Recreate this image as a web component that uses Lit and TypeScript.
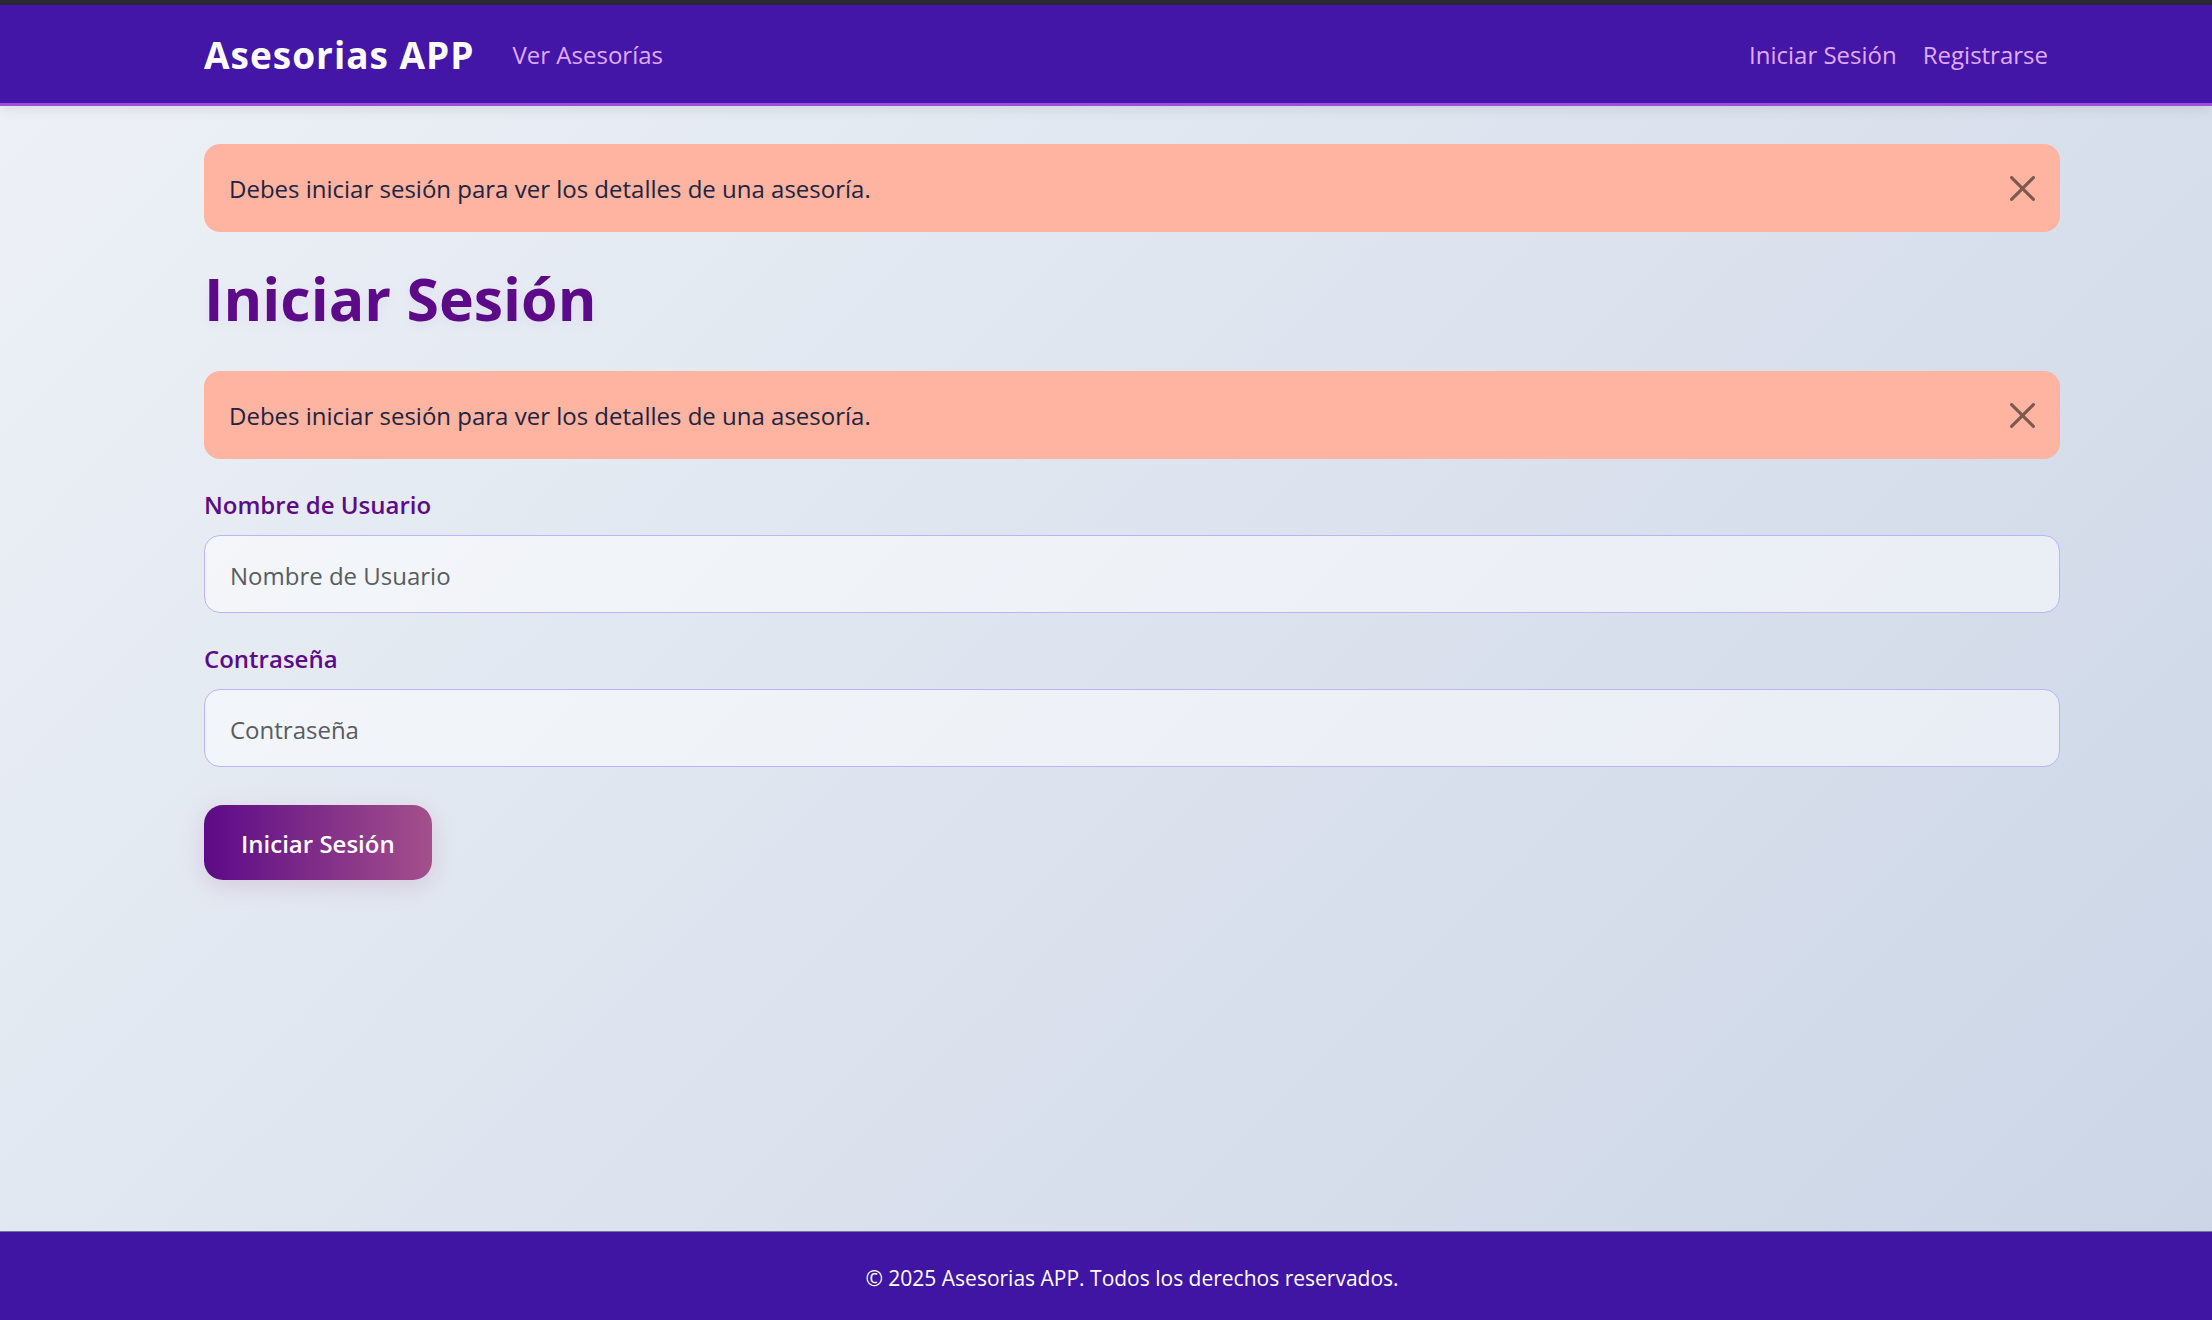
import { LitElement, html, css } from "lit";
import { customElement, property, state } from "lit/decorators.js";

@customElement("alert-banner")
class AlertBanner extends LitElement {
  @state() private closed = false;

  static styles = css`
    :host {
      display: block;
    }
    .alert {
      display: flex;
      align-items: center;
      justify-content: space-between;
      min-height: 88px;
      padding: 0 25px;
      box-sizing: border-box;
      border-radius: 16px;
      background: #ffb3a1;
      color: #212340;
    }
    .text {
      margin: 0;
      padding-top: 2px;
    }
    .close {
      display: flex;
      padding: 0;
      border: 0;
      background: none;
      color: #000;
      opacity: 0.5;
      cursor: pointer;
    }
    .icon {
      width: 25px;
      height: 25px;
    }
  `;

  render() {
    if (this.closed) return html``;
    return html`
      <div class="alert" role="alert">
        <p class="text"><slot></slot></p>
        <button class="close" type="button" aria-label="Cerrar" @click=${() => (this.closed = true)}>
          <svg class="icon" viewBox="0 0 16 16" fill="currentColor" aria-hidden="true">
            <path
              d="M.293.293a1 1 0 0 1 1.414 0L8 6.586 14.293.293a1 1 0 1 1 1.414 1.414L9.414 8l6.293 6.293a1 1 0 0 1-1.414 1.414L8 9.414l-6.293 6.293a1 1 0 0 1-1.414-1.414L6.586 8 .293 1.707a1 1 0 0 1 0-1.414z"
            />
          </svg>
        </button>
      </div>
    `;
  }
}

@customElement("form-field")
class FormField extends LitElement {
  @property() label = "";
  @property() type = "text";

  static styles = css`
    :host {
      display: flex;
      flex-direction: column;
      gap: 12px;
    }
    .label {
      color: #5c0a87;
      font-weight: 600;
      line-height: 36px;
    }
    .input {
      width: 100%;
      height: 78px;
      padding: 2px 25px 0;
      box-sizing: border-box;
      border: 1px solid #bcb2ff;
      border-radius: 16px;
      background: rgba(255, 255, 255, 0.5);
      color: #212340;
      font: inherit;
    }
    .input::placeholder {
      color: #595c5f;
      opacity: 1;
    }
  `;

  render() {
    return html`
      <label class="label" for="control">${this.label}</label>
      <input class="input" id="control" type=${this.type} placeholder=${this.label} />
    `;
  }
}

@customElement("app-root")
class AppRoot extends LitElement {
  static styles = css`
    :host {
      display: block;
      font-family: "Segoe UI", "Open Sans", "Noto Sans", sans-serif;
      font-size: 24px;
      line-height: 36px;
    }
    .page {
      display: flex;
      flex-direction: column;
      min-height: 100vh;
      background: linear-gradient(135deg, #eef2f7, #cbd5e6);
    }
    .strip {
      height: 5px;
      background: #2b2a33;
    }
    .navbar,
    .main,
    .footer {
      padding-left: 52px;
    }
    .container {
      width: calc(100% - 48px);
      max-width: 1856px;
      margin: 0 auto;
    }
    .navbar {
      background: #4316a7;
      border-bottom: 3px solid #9d4edd;
      box-shadow: 0 4px 12px rgba(0, 0, 0, 0.08);
    }
    .bar {
      display: flex;
      align-items: center;
      min-height: 98px;
    }
    .brand {
      margin-right: 38px;
      padding-top: 2px;
      color: #fff;
      font-size: 37px;
      font-weight: 700;
      letter-spacing: 1px;
      text-decoration: none;
    }
    .links {
      display: flex;
      flex: 1;
      gap: 26px;
      padding-top: 2px;
      padding-right: 12px;
    }
    .spacer {
      flex: 1;
    }
    .link {
      color: #e0aaff;
      text-decoration: none;
    }
    .main {
      flex: 1;
      padding-top: 38px;
      padding-bottom: 38px;
    }
    .title {
      margin: 30px 0 37px;
      color: #5c0a87;
      font-size: 59px;
      font-weight: 700;
      line-height: 72px;
      text-shadow: 0 4px 12px rgba(157, 78, 221, 0.08);
    }
    .form {
      display: flex;
      flex-direction: column;
      gap: 28px;
      margin-top: 28px;
    }
    .submit {
      align-self: flex-start;
      height: 75px;
      margin-top: 10px;
      padding: 2px 37px 0;
      border: 0;
      border-radius: 19px;
      background: linear-gradient(90deg, #5c0a87, #a4508b);
      box-shadow: 0 6px 24px rgba(164, 80, 139, 0.2);
      color: #fff;
      font: inherit;
      font-weight: 600;
      cursor: pointer;
    }
    .footer {
      border-top: 1px solid #74739a;
      background: #4115a4;
      color: #fff;
      font-size: 21px;
      text-align: center;
    }
    .copy {
      padding: 28px 0 24px;
    }
  `;

  render() {
    return html`
      <div class="page">
        <div class="strip"></div>
        <header class="navbar">
          <nav class="container bar">
            <a class="brand" href="#">Asesorias APP</a>
            <div class="links">
              <a class="link" href="#asesorias">Ver Asesorías</a>
              <span class="spacer"></span>
              <a class="link" href="#login">Iniciar Sesión</a>
              <a class="link" href="#registro">Registrarse</a>
            </div>
          </nav>
        </header>
        <main class="main">
          <div class="container">
            <alert-banner>Debes iniciar sesión para ver los detalles de una asesoría.</alert-banner>
            <h1 class="title">Iniciar Sesión</h1>
            <alert-banner>Debes iniciar sesión para ver los detalles de una asesoría.</alert-banner>
            <form class="form" @submit=${(e: Event) => e.preventDefault()}>
              <form-field label="Nombre de Usuario"></form-field>
              <form-field label="Contraseña" type="password"></form-field>
              <button class="submit" type="submit">Iniciar Sesión</button>
            </form>
          </div>
        </main>
        <footer class="footer">
          <p class="container copy">© 2025 Asesorias APP. Todos los derechos reservados.</p>
        </footer>
      </div>
    `;
  }
}
